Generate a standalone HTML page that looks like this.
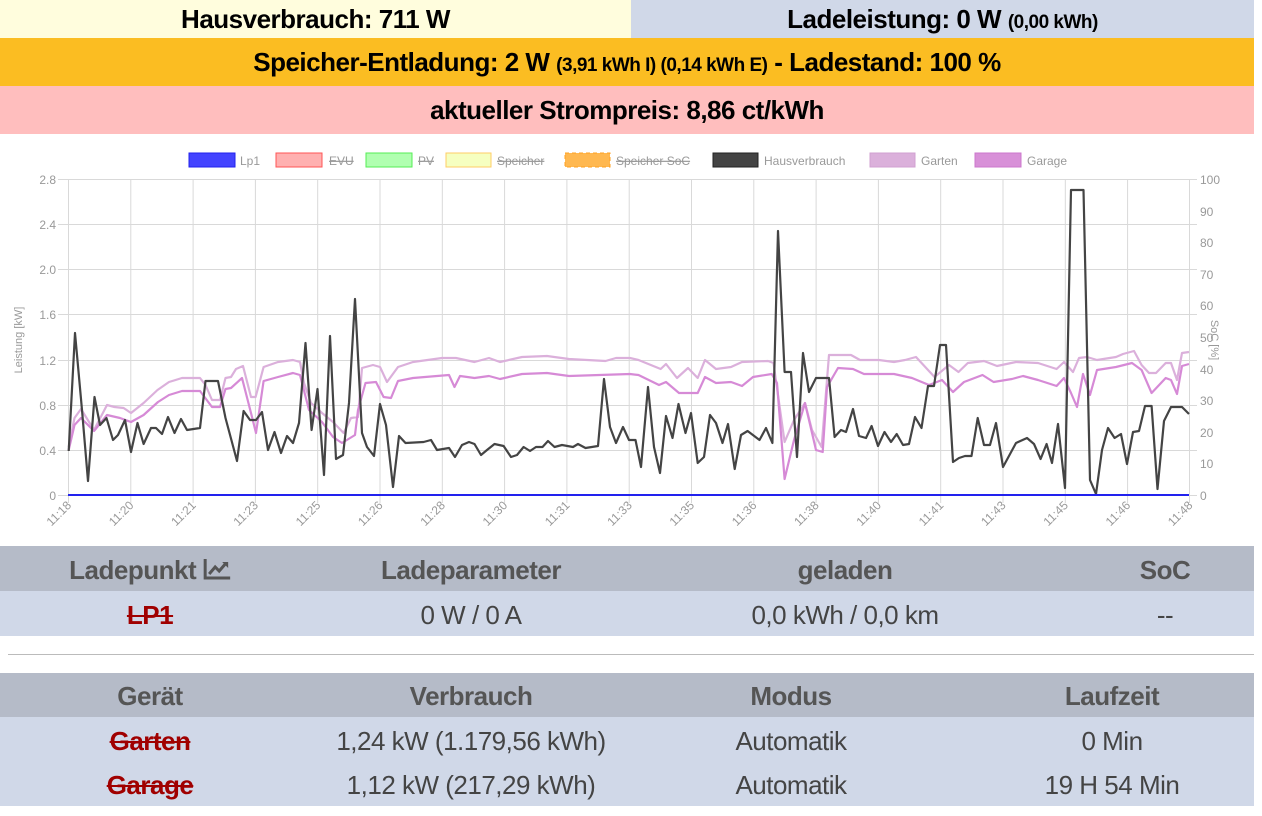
<!DOCTYPE html>
<html><head><meta charset="utf-8"><style>
*{margin:0;padding:0;box-sizing:border-box}
body{width:1262px;height:816px;background:#fff;font-family:"Liberation Sans",sans-serif;position:relative;overflow:hidden}
.bar{position:absolute;text-align:center;font-weight:bold;font-size:26px;color:#000;letter-spacing:-0.5px}
.bar small{font-size:19px}
.t{position:absolute;font-size:26px;transform:translateX(-50%);white-space:nowrap;letter-spacing:-0.5px}
.h{font-weight:bold;color:#555}
.r{color:#444}
.red{color:#a00000;font-weight:bold;text-decoration:line-through}
</style></head><body>
<div class="bar" style="left:0;top:0;width:631px;height:38px;line-height:38px;background:#fffddd">Hausverbrauch: 711 W</div>
<div class="bar" style="left:631px;top:0;width:623px;height:38px;line-height:38px;background:#d0d8e8">Ladeleistung: 0 W <small>(0,00 kWh)</small></div>
<div class="bar" style="left:0;top:38px;width:1254px;height:48px;line-height:48px;background:#fbbd22">Speicher-Entladung: 2 W <small>(3,91 kWh I) (0,14 kWh E)</small> - Ladestand: 100 %</div>
<div class="bar" style="left:0;top:86px;width:1254px;height:48px;line-height:48px;background:#ffbebe">aktueller Strompreis: 8,86 ct/kWh</div>

<svg style="position:absolute;left:0;top:134px" width="1262" height="411" viewBox="0 134 1262 411" font-family="Liberation Sans, sans-serif">
<g stroke="#d9d9d9" stroke-width="1">
<line x1="58" y1="179.5" x2="1197" y2="179.5"/><line x1="58" y1="224.5" x2="1197" y2="224.5"/><line x1="58" y1="269.5" x2="1197" y2="269.5"/><line x1="58" y1="314.5" x2="1197" y2="314.5"/><line x1="58" y1="360.5" x2="1197" y2="360.5"/><line x1="58" y1="405.5" x2="1197" y2="405.5"/><line x1="58" y1="450.5" x2="1197" y2="450.5"/><line x1="58" y1="495.5" x2="1197" y2="495.5"/>
<line x1="68.5" y1="179" x2="68.5" y2="503"/><line x1="130.8" y1="179" x2="130.8" y2="503"/><line x1="193.1" y1="179" x2="193.1" y2="503"/><line x1="255.4" y1="179" x2="255.4" y2="503"/><line x1="317.7" y1="179" x2="317.7" y2="503"/><line x1="380" y1="179" x2="380" y2="503"/><line x1="442.3" y1="179" x2="442.3" y2="503"/><line x1="504.6" y1="179" x2="504.6" y2="503"/><line x1="566.9" y1="179" x2="566.9" y2="503"/><line x1="629.2" y1="179" x2="629.2" y2="503"/><line x1="691.5" y1="179" x2="691.5" y2="503"/><line x1="753.8" y1="179" x2="753.8" y2="503"/><line x1="816.1" y1="179" x2="816.1" y2="503"/><line x1="878.4" y1="179" x2="878.4" y2="503"/><line x1="940.7" y1="179" x2="940.7" y2="503"/><line x1="1003" y1="179" x2="1003" y2="503"/><line x1="1065.3" y1="179" x2="1065.3" y2="503"/><line x1="1127.6" y1="179" x2="1127.6" y2="503"/><line x1="1189.5" y1="179" x2="1189.5" y2="503"/>
</g>
<g font-size="12" fill="#999" text-anchor="end">
<text x="56" y="184">2.8</text><text x="56" y="229">2.4</text><text x="56" y="274">2.0</text><text x="56" y="319">1.6</text><text x="56" y="365">1.2</text><text x="56" y="410">0.8</text><text x="56" y="455">0.4</text><text x="56" y="500">0</text>
</g>
<g font-size="12" fill="#999">
<text x="1200" y="184">100</text><text x="1200" y="216">90</text><text x="1200" y="247">80</text><text x="1200" y="279">70</text><text x="1200" y="310">60</text><text x="1200" y="342">50</text><text x="1200" y="374">40</text><text x="1200" y="405">30</text><text x="1200" y="437">20</text><text x="1200" y="468">10</text><text x="1200" y="500">0</text>
</g>
<text font-size="11" fill="#999" transform="translate(22,340) rotate(-90)" text-anchor="middle">Leistung [kW]</text>
<text font-size="11" fill="#999" transform="translate(1211,340) rotate(90)" text-anchor="middle">SoC [%]</text>
<g font-size="12" fill="#999" text-anchor="end">
<text transform="translate(72,506) rotate(-45)">11:18</text><text transform="translate(134.3,506) rotate(-45)">11:20</text><text transform="translate(196.6,506) rotate(-45)">11:21</text><text transform="translate(258.9,506) rotate(-45)">11:23</text><text transform="translate(321.2,506) rotate(-45)">11:25</text><text transform="translate(383.5,506) rotate(-45)">11:26</text><text transform="translate(445.8,506) rotate(-45)">11:28</text><text transform="translate(508.1,506) rotate(-45)">11:30</text><text transform="translate(570.4,506) rotate(-45)">11:31</text><text transform="translate(632.7,506) rotate(-45)">11:33</text><text transform="translate(695,506) rotate(-45)">11:35</text><text transform="translate(757.3,506) rotate(-45)">11:36</text><text transform="translate(819.6,506) rotate(-45)">11:38</text><text transform="translate(881.9,506) rotate(-45)">11:40</text><text transform="translate(944.2,506) rotate(-45)">11:41</text><text transform="translate(1006.5,506) rotate(-45)">11:43</text><text transform="translate(1068.8,506) rotate(-45)">11:45</text><text transform="translate(1131.1,506) rotate(-45)">11:46</text><text transform="translate(1193.4,506) rotate(-45)">11:48</text>
</g>
<g font-size="12" fill="#999">
<rect x="189" y="153" width="46" height="14" fill="#4444ff" stroke="#2222ee"/><text x="240" y="165">Lp1</text>
<rect x="276" y="153" width="46" height="14" fill="#ffb0b0" stroke="#ff5555"/><text x="329" y="165" text-decoration="line-through">EVU</text>
<rect x="366" y="153" width="46" height="14" fill="#b0ffb0" stroke="#55ee55"/><text x="418" y="165" text-decoration="line-through">PV</text>
<rect x="446" y="153" width="45" height="14" fill="#f6ffc0" stroke="#ffcc66"/><text x="497" y="165" text-decoration="line-through">Speicher</text>
<rect x="565" y="153" width="45" height="14" fill="#ffb850" stroke="#ffa020" stroke-dasharray="4 3"/><text x="616" y="165" text-decoration="line-through">Speicher SoC</text>
<rect x="713" y="153" width="45" height="14" fill="#444" stroke="#222"/><text x="764" y="165">Hausverbrauch</text>
<rect x="870" y="153" width="45" height="14" fill="#dbb0db" stroke="#d0a0d0"/><text x="921" y="165">Garten</text>
<rect x="975" y="153" width="46" height="14" fill="#d890d8" stroke="#cc77cc"/><text x="1027" y="165">Garage</text>
</g>
<g fill="none" stroke-width="2.2" stroke-linejoin="round">
<polyline stroke="#dbb0db" points="68.7,447 74.5,418 81,409 94,430 107,405 114.5,407 123.6,408 131,413 143.6,403 157.5,390 169,382 182,378 200,378 205.5,385 212,400 220,400 225.5,378 231,377 236,369 243,366 251,397 255.6,397 263.6,367 278,362 293,360 300,362 304,383 311,403 322,413 333,422 343.6,433 351,418 358,417 362,368 373,365 380,367 387,382 398,367 413,362 442,358 456,358 474.5,362 489,358 500,362 522,357 547,356 569,359 605.5,361 616,358 630,358 638.5,360 660.7,369 666,364 677,378 688,368 697.7,378 705,360 716,369 731,367 742,362 768,361 773.5,363 784.6,442 794,420 805,403 812,430 821.6,447 829,355 851,355 860,360 879,360 894,362 905,360 916,357 934.5,377 949,365 958.5,372 967.8,363 984,361 997,366 1016,362 1038,363 1056.6,369 1064,362 1073,372 1079,358 1087,357 1097,360 1116,357 1123,354 1134,351 1141.6,365 1149,373 1156,373 1165.7,363 1171,363 1177,380 1182,353 1189,352"/>
<polyline stroke="#d68ad6" points="68.7,450 74.5,425 81,418 94,431 107,415 120,418 131,422 143.6,415 158,402 169,395 182,391 200,391 212,407 220,407 225.5,389 231,388 242,378 251,413 256,433 263.6,381 278,377 293,373 300,375 309,410 322,422 333,437 342,443 355,435 358,410 365.5,383 376,382 383.6,397 391,398 398,381 413,378 449,375 454.5,387 460,376 474.5,378 489,376 500,379 522,374 547,373 569,376 630,374 638.5,375 659,385 666,382 679,393 697.7,393 705,377 716,383 731,382 742,386 753,377 771.7,374 777,383 784.6,479 794,440 805,403 816,450 822.7,452 827,387 838,368 853,369 864,374 894,374 912,378 929,385 942,380 953,392 964,382 982.5,375 993.6,382 1012,379 1023,376 1038,380 1056.6,386 1064,378 1071,393 1077,407 1083,374 1090,395 1097,370 1116,367 1132,363 1141.6,370 1151.6,393 1165.7,378 1171,380 1177,394 1182,366 1189,364"/>
<polyline stroke="#444" points="68.7,451 75,333 82,410 88,481 94.5,397 100,425 106.5,418 113,440 118,435 125,420 131,452 137.5,423 143.6,444 151,428 156,428 162,434 168,417 174.5,433 181,419 187,430 200,428 205.5,381 218,381 225.5,418 237,461 243.6,411 250,420 256,420 262,412 268,450 274.5,432 281,453 287,436 293,443 299,423 305.5,343 311.6,430 317.5,389 324,475 330,336 336,459 343,455 349,403 355,299 362,433 367,447 374,456 380,404 386,425 393,487 399,436 405.5,443 423.6,442 431,440 437,450 449,448 455,457 462,445 469,442 474.5,444 481,455 487,450 494.5,444 503.6,446 511,457 517,455 523.6,447 530,451 536,447 542.5,447 548,441 554.5,447 562,445 573,447 578,444 585.5,448 598,446 604,379 610,427 616,443 623,427 629,440 635.5,440 641,467 648,387 654,447 660,473 666,416 672.5,438 678.5,404 685.5,433 691,413 697.7,463 704,457 710,415 716,423 722.5,443 728,424 734.7,469 741,435 747.6,431 759.5,440 766,428 772.4,443 778,231 784.6,372 791,372 797,457 803,353 809,392 816,378 829,378 834.6,437 841,430 846,432 853,409 859,436 866,438 871.6,426 878,446 884.5,432 891,442 896.7,434 903,445 909,444 915,417 921.5,428 928,386 934,386 940,345 946,345 953,462 959,458 965,456 971.5,456 977.7,418 984,445 990,445 996,423 1003,467 1016,443 1027,438 1034,444 1040.6,459 1046.6,444 1052,463 1058,424 1065,488 1071,190 1083.5,190 1090,480 1096,494 1102,450 1108,428 1114.6,438 1121,434 1127,464 1133,432 1139,431 1145,406 1151.6,406 1157.5,489 1164,421 1171,407 1182,407 1189,414"/>
<line x1="68" y1="495" x2="1189" y2="495" stroke="#2222ee" stroke-width="2"/>
</g>
</svg>

<div style="position:absolute;left:0;top:546px;width:1254px;height:45px;background:#b5bbc8"></div>
<div style="position:absolute;left:0;top:591px;width:1254px;height:45px;background:#d0d8e8"></div>
<div class="t h" style="left:150px;top:555px">Ladepunkt <svg width="28" height="22" viewBox="0 0 28 22" style="vertical-align:-1px"><path d="M2 1V20H27" fill="none" stroke="#555" stroke-width="3"/><path d="M6 16L12 9L16 13L23 5" fill="none" stroke="#555" stroke-width="3"/><path d="M19 4H25V10Z" fill="#555"/></svg></div>
<div class="t h" style="left:471px;top:555px">Ladeparameter</div>
<div class="t h" style="left:845px;top:555px">geladen</div>
<div class="t h" style="left:1165px;top:555px">SoC</div>
<div class="t red" style="left:150px;top:600px">LP1</div>
<div class="t r" style="left:471px;top:600px">0 W / 0 A</div>
<div class="t r" style="left:845px;top:600px">0,0 kWh / 0,0 km</div>
<div class="t r" style="left:1165px;top:600px">--</div>

<div style="position:absolute;left:8px;top:654px;width:1246px;height:1px;background:#bbb"></div>

<div style="position:absolute;left:0;top:673px;width:1254px;height:44px;background:#b5bbc8"></div>
<div style="position:absolute;left:0;top:717px;width:1254px;height:89px;background:#d0d8e8"></div>
<div class="t h" style="left:150px;top:681px">Gerät</div>
<div class="t h" style="left:471px;top:681px">Verbrauch</div>
<div class="t h" style="left:791px;top:681px">Modus</div>
<div class="t h" style="left:1112px;top:681px">Laufzeit</div>
<div class="t red" style="left:150px;top:726px">Garten</div>
<div class="t r" style="left:471px;top:726px">1,24 kW (1.179,56 kWh)</div>
<div class="t r" style="left:791px;top:726px">Automatik</div>
<div class="t r" style="left:1112px;top:726px">0 Min</div>
<div class="t red" style="left:150px;top:770px">Garage</div>
<div class="t r" style="left:471px;top:770px">1,12 kW (217,29 kWh)</div>
<div class="t r" style="left:791px;top:770px">Automatik</div>
<div class="t r" style="left:1112px;top:770px">19 H 54 Min</div>
</body></html>
